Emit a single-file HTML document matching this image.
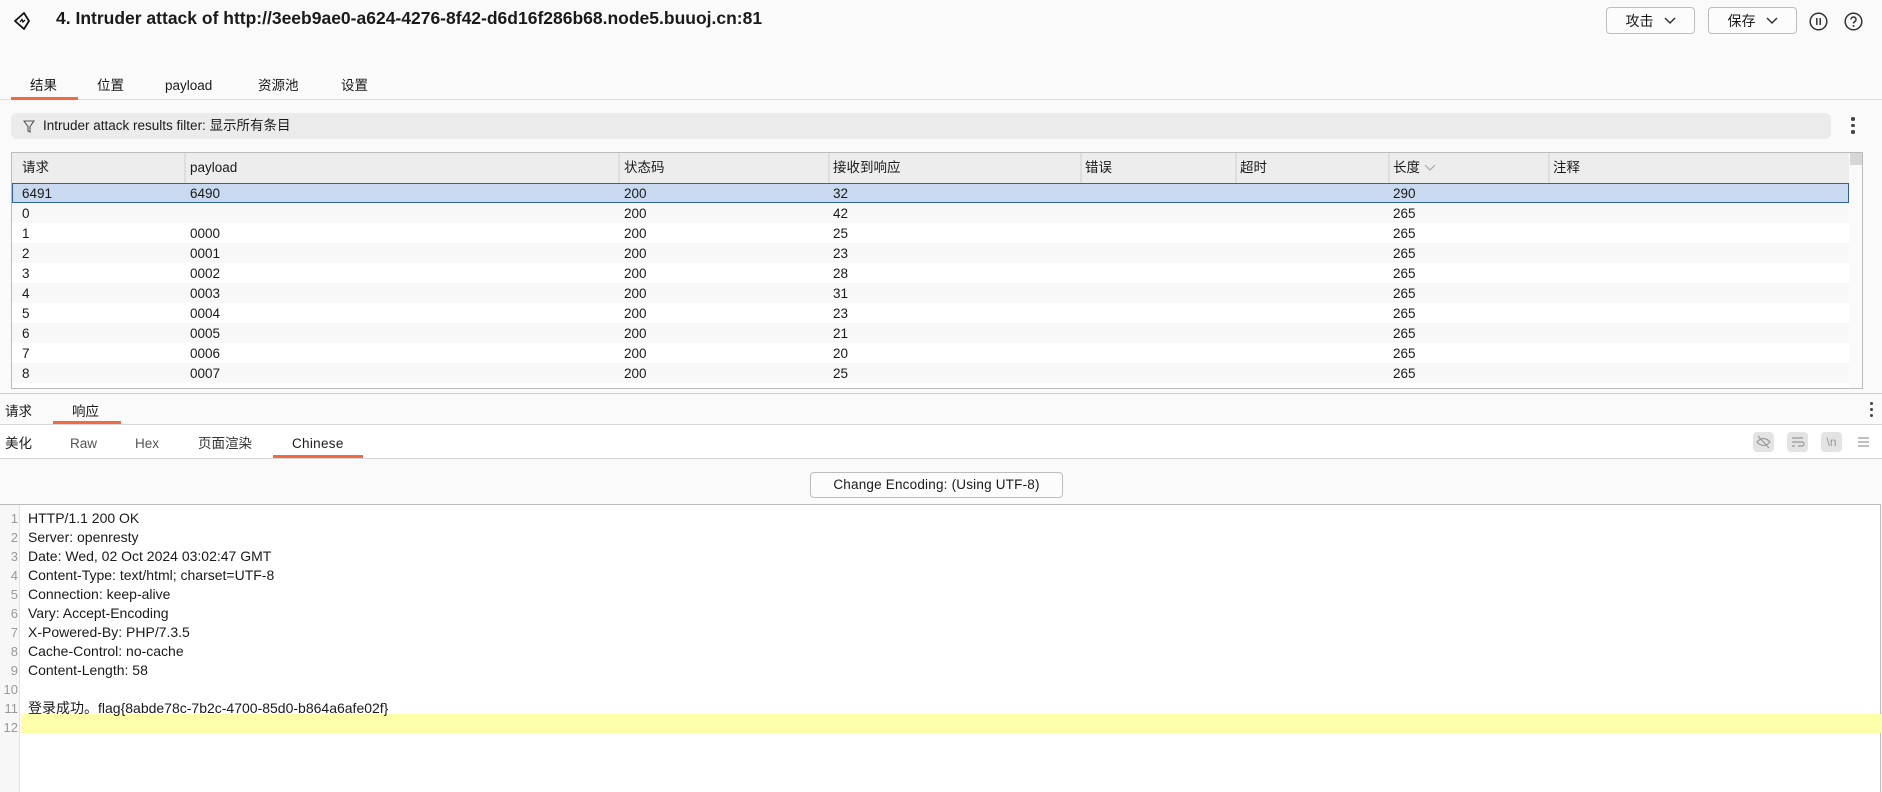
<!DOCTYPE html>
<html><head><meta charset="utf-8">
<style>
*{margin:0;padding:0;box-sizing:border-box}
body{width:1882px;height:792px;background:#fafafa;font-family:"Liberation Sans","Noto Sans CJK SC",sans-serif;font-size:13px;color:#1a1a1a;position:relative;overflow:hidden}
.a{position:absolute;white-space:nowrap;line-height:18px}
.btn{position:absolute;border:1px solid #bdbdbd;border-radius:4px;background:#fcfcfc;font-size:14px;display:flex;align-items:center;justify-content:center;gap:10px;line-height:18px}
.hl{position:absolute;left:0;right:0;height:1px;background:#d6d6d6}
.tab{position:absolute;font-size:13.5px}
.ul{position:absolute;height:3px;background:#f26a3d}
.row{position:absolute;left:12px;width:1837px;height:20px}
.rows span{line-height:20px}
.ln{position:absolute;left:0;width:18px;text-align:right;color:#999;font-size:13px;line-height:19px}
.tx{position:absolute;left:28px;font-size:14px;line-height:19px;white-space:nowrap}
</style></head><body>
<svg class="a" style="left:12px;top:11px" width="20" height="20" viewBox="0 0 20 20"><path d="M12 2 L3 10 L12 18 L17 10 Z" fill="none" stroke="#111" stroke-width="1.8" stroke-linejoin="round"/><path d="M8 11 L10 8.5 L11 11 L13 9" fill="none" stroke="#111" stroke-width="1.3"/></svg>
<div class="a" style="left:56px;top:9px;font-size:17.5px;font-weight:bold">4. Intruder attack of http://3eeb9ae0-a624-4276-8f42-d6d16f286b68.node5.buuoj.cn:81</div>
<div class="btn" style="left:1606px;top:7px;width:89px;height:27px">攻击 <svg width="12" height="8"><path d="M1 1 L6 6 L11 1" fill="none" stroke="#333" stroke-width="1.5"/></svg></div>
<div class="btn" style="left:1708px;top:7px;width:89px;height:27px">保存 <svg width="12" height="8"><path d="M1 1 L6 6 L11 1" fill="none" stroke="#333" stroke-width="1.5"/></svg></div>
<svg class="a" style="left:1809px;top:12px" width="19" height="19"><circle cx="9.5" cy="9.5" r="8.3" fill="none" stroke="#333" stroke-width="1.5"/><path d="M7.8 6v7M11.2 6v7" stroke="#333" stroke-width="1.5"/></svg>
<svg class="a" style="left:1844px;top:12px" width="19" height="19"><circle cx="9.5" cy="9.5" r="8.3" fill="none" stroke="#333" stroke-width="1.5"/><path d="M7 7.5a2.5 2.5 0 1 1 3.5 2.3c-.8.4-1 .9-1 1.7" fill="none" stroke="#333" stroke-width="1.5"/><circle cx="9.5" cy="14" r="1" fill="#333"/></svg>

<div class="tab a" style="left:30px;top:77px">结果</div>
<div class="tab a" style="left:97px;top:77px">位置</div>
<div class="tab a" style="left:165px;top:77px">payload</div>
<div class="tab a" style="left:258px;top:77px">资源池</div>
<div class="tab a" style="left:341px;top:77px">设置</div>
<div class="hl" style="top:99px;background:#dcdcdc"></div>
<div class="ul" style="left:11px;top:97px;width:67px"></div>

<div class="a" style="left:11px;top:113px;width:1820px;height:26px;background:#ebebeb;border-radius:6px"></div>
<svg class="a" style="left:23px;top:119px" width="12" height="15"><path d="M1 2 H11 L7 7.5 V13 L5 12 V7.5 Z" fill="none" stroke="#555" stroke-width="1.1"/></svg>
<div class="a" style="left:43px;top:117px;font-size:13.5px">Intruder attack results filter: 显示所有条目</div>
<div class="a" style="left:1851px;top:117px;width:4px;height:18px"><div style="width:3.5px;height:3.5px;border-radius:50%;background:#444;margin-bottom:3px"></div><div style="width:3.5px;height:3.5px;border-radius:50%;background:#444;margin-bottom:3px"></div><div style="width:3.5px;height:3.5px;border-radius:50%;background:#444"></div></div>

<div class="a" style="left:11px;top:152px;width:1852px;height:237px;border:1px solid #bcbcbc;background:#fff"></div>
<div class="a" style="left:12px;top:153px;width:1837px;height:30px;background:#ededed"></div>
<div class="a" style="left:1849px;top:153px;width:13px;height:235px;background:#fafafa"></div>
<div class="a" style="left:1850px;top:153px;width:12px;height:12px;background:#d7d7d7"></div>
<div class="a" style="left:184px;top:153px;width:2px;height:30px;background:#dedede"></div>
<div class="a" style="left:618px;top:153px;width:2px;height:30px;background:#dedede"></div>
<div class="a" style="left:828px;top:153px;width:2px;height:30px;background:#dedede"></div>
<div class="a" style="left:1080px;top:153px;width:2px;height:30px;background:#dedede"></div>
<div class="a" style="left:1235px;top:153px;width:2px;height:30px;background:#dedede"></div>
<div class="a" style="left:1388px;top:153px;width:2px;height:30px;background:#dedede"></div>
<div class="a" style="left:1548px;top:153px;width:2px;height:30px;background:#dedede"></div>
<div class="a" style="top:159px;left:22px;font-size:13.5px">请求</div>
<div class="a" style="top:159px;left:190px;font-size:13.5px">payload</div>
<div class="a" style="top:159px;left:624px;font-size:13.5px">状态码</div>
<div class="a" style="top:159px;left:833px;font-size:13.5px">接收到响应</div>
<div class="a" style="top:159px;left:1085px;font-size:13.5px">错误</div>
<div class="a" style="top:159px;left:1240px;font-size:13.5px">超时</div>
<div class="a" style="top:159px;left:1393px;font-size:13.5px">长度 <svg width="12" height="8"><path d="M1 1 L6 6 L11 1" fill="none" stroke="#aaa" stroke-width="1.2"/></svg></div>
<div class="a" style="top:159px;left:1553px;font-size:13.5px">注释</div>

<div class="row" style="top:183px;background:#c9d9ef;border:1.5px solid #2f62a0"></div>
<div class="row" style="top:203px;background:#f8f8f8"></div>
<div class="row" style="top:243px;background:#f8f8f8"></div>
<div class="row" style="top:283px;background:#f8f8f8"></div>
<div class="row" style="top:323px;background:#f8f8f8"></div>
<div class="row" style="top:363px;background:#f8f8f8"></div>

<div class="rows" style="position:absolute;left:0;top:184px;width:1849px;font-size:13.5px;line-height:20px">
<div style="position:relative;height:20px"><span class="a" style="left:22px">6491</span><span class="a" style="left:190px">6490</span><span class="a" style="left:624px">200</span><span class="a" style="left:833px">32</span><span class="a" style="left:1393px">290</span></div>
<div style="position:relative;height:20px"><span class="a" style="left:22px">0</span><span class="a" style="left:624px">200</span><span class="a" style="left:833px">42</span><span class="a" style="left:1393px">265</span></div>
<div style="position:relative;height:20px"><span class="a" style="left:22px">1</span><span class="a" style="left:190px">0000</span><span class="a" style="left:624px">200</span><span class="a" style="left:833px">25</span><span class="a" style="left:1393px">265</span></div>
<div style="position:relative;height:20px"><span class="a" style="left:22px">2</span><span class="a" style="left:190px">0001</span><span class="a" style="left:624px">200</span><span class="a" style="left:833px">23</span><span class="a" style="left:1393px">265</span></div>
<div style="position:relative;height:20px"><span class="a" style="left:22px">3</span><span class="a" style="left:190px">0002</span><span class="a" style="left:624px">200</span><span class="a" style="left:833px">28</span><span class="a" style="left:1393px">265</span></div>
<div style="position:relative;height:20px"><span class="a" style="left:22px">4</span><span class="a" style="left:190px">0003</span><span class="a" style="left:624px">200</span><span class="a" style="left:833px">31</span><span class="a" style="left:1393px">265</span></div>
<div style="position:relative;height:20px"><span class="a" style="left:22px">5</span><span class="a" style="left:190px">0004</span><span class="a" style="left:624px">200</span><span class="a" style="left:833px">23</span><span class="a" style="left:1393px">265</span></div>
<div style="position:relative;height:20px"><span class="a" style="left:22px">6</span><span class="a" style="left:190px">0005</span><span class="a" style="left:624px">200</span><span class="a" style="left:833px">21</span><span class="a" style="left:1393px">265</span></div>
<div style="position:relative;height:20px"><span class="a" style="left:22px">7</span><span class="a" style="left:190px">0006</span><span class="a" style="left:624px">200</span><span class="a" style="left:833px">20</span><span class="a" style="left:1393px">265</span></div>
<div style="position:relative;height:20px"><span class="a" style="left:22px">8</span><span class="a" style="left:190px">0007</span><span class="a" style="left:624px">200</span><span class="a" style="left:833px">25</span><span class="a" style="left:1393px">265</span></div>
</div>

<div class="hl" style="top:393px;background:#d0d0d0"></div>
<div class="tab a" style="left:5px;top:403px">请求</div>
<div class="tab a" style="left:72px;top:403px">响应</div>
<div class="ul" style="left:53px;top:421px;width:68px"></div>
<div class="hl" style="top:424px"></div>
<div class="a" style="left:1870px;top:402px;width:4px"><div style="width:3px;height:3px;border-radius:50%;background:#444;margin-bottom:3px"></div><div style="width:3px;height:3px;border-radius:50%;background:#444;margin-bottom:3px"></div><div style="width:3px;height:3px;border-radius:50%;background:#444"></div></div>

<div class="a" style="left:0;top:425px;width:1882px;height:34px;background:#fff"></div>
<div class="tab a" style="left:5px;top:435px">美化</div>
<div class="tab a" style="left:70px;top:435px;color:#555">Raw</div>
<div class="tab a" style="left:135px;top:435px;color:#555">Hex</div>
<div class="tab a" style="left:198px;top:435px;color:#333">页面渲染</div>
<div class="tab a" style="left:292px;top:435px;letter-spacing:0.3px">Chinese</div>
<div class="ul" style="left:273px;top:455px;width:90px"></div>
<div class="hl" style="top:458px"></div>
<div class="a" style="left:1753px;top:432px;width:21px;height:20px;background:#e3e3e3;border-radius:4px"><svg width="21" height="20"><path d="M4 10 Q10.5 3 17 10 Q10.5 17 4 10Z" fill="none" stroke="#999" stroke-width="1.2"/><path d="M5 4 L16 16" stroke="#999" stroke-width="1.2"/></svg></div>
<div class="a" style="left:1787px;top:432px;width:21px;height:20px;background:#e3e3e3;border-radius:4px"><svg width="21" height="20"><path d="M5 6H16M5 10H15a2 2 0 0 1 0 4H11M5 14H8" fill="none" stroke="#999" stroke-width="1.2"/></svg></div>
<div class="a" style="left:1821px;top:432px;width:21px;height:20px;background:#e3e3e3;border-radius:4px;color:#999;font-size:12px;text-align:center;line-height:20px">\n</div>
<svg class="a" style="left:1857px;top:435px" width="14" height="14"><path d="M1 3H12M1 7H12M1 11H12" stroke="#999" stroke-width="1.3"/></svg>

<div class="btn" style="left:810px;top:472px;width:253px;height:26px;font-size:13.5px;letter-spacing:0.2px">Change Encoding: (Using UTF-8)</div>

<div class="a" style="left:0;top:504px;width:1881px;height:288px;background:#fff;border-top:1px solid #bcbcbc;border-right:1px solid #bcbcbc"></div>
<div class="a" style="left:0;top:505px;width:20px;height:287px;background:#f7f7f7;border-right:1px solid #e2e2e2"></div>
<div class="a" style="left:21px;top:714px;width:1860px;height:19px;background:#ffffaa"></div>
<div style="position:absolute;left:0;top:509px;width:1880px;line-height:19px">
<div style="position:relative;height:19px"><span class="ln">1</span><span class="tx">HTTP/1.1 200 OK</span></div>
<div style="position:relative;height:19px"><span class="ln">2</span><span class="tx">Server: openresty</span></div>
<div style="position:relative;height:19px"><span class="ln">3</span><span class="tx">Date: Wed, 02 Oct 2024 03:02:47 GMT</span></div>
<div style="position:relative;height:19px"><span class="ln">4</span><span class="tx">Content-Type: text/html; charset=UTF-8</span></div>
<div style="position:relative;height:19px"><span class="ln">5</span><span class="tx">Connection: keep-alive</span></div>
<div style="position:relative;height:19px"><span class="ln">6</span><span class="tx">Vary: Accept-Encoding</span></div>
<div style="position:relative;height:19px"><span class="ln">7</span><span class="tx">X-Powered-By: PHP/7.3.5</span></div>
<div style="position:relative;height:19px"><span class="ln">8</span><span class="tx">Cache-Control: no-cache</span></div>
<div style="position:relative;height:19px"><span class="ln">9</span><span class="tx">Content-Length: 58</span></div>
<div style="position:relative;height:19px"><span class="ln">10</span></div>
<div style="position:relative;height:19px"><span class="ln">11</span><span class="tx">登录成功。flag{8abde78c-7b2c-4700-85d0-b864a6afe02f}</span></div>
<div style="position:relative;height:19px"><span class="ln">12</span></div>
</div>
</body></html>
